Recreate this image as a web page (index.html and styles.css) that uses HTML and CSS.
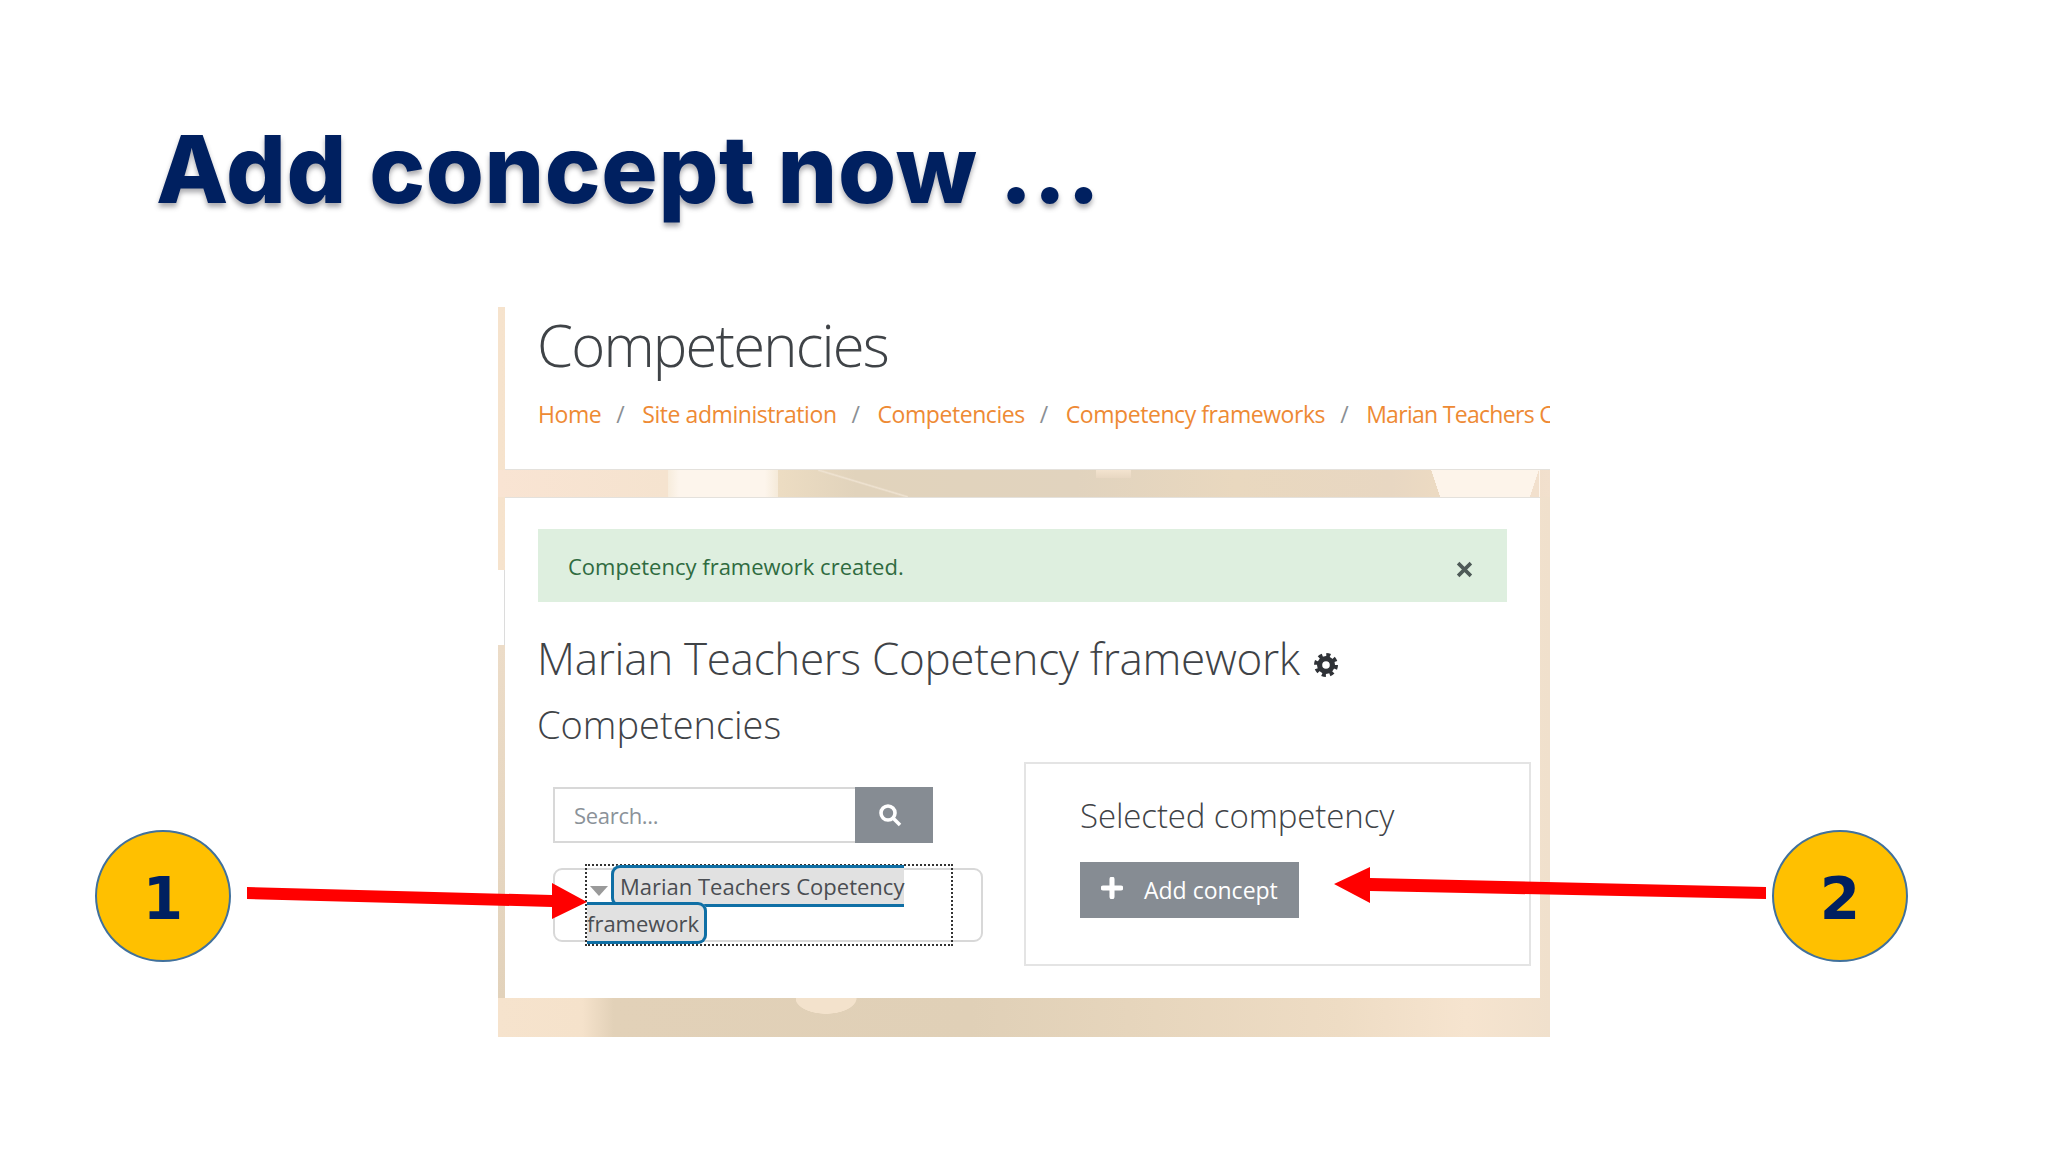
FILE: index.html
```html
<!DOCTYPE html>
<html lang="en">
<head>
<meta charset="utf-8">
<title>Add concept now</title>
<link rel="stylesheet" href="styles.css">
</head>
<body>
<main class="slide">
  <h1 class="slide-title">Add concept now ...</h1>
  <section class="shot">
    <header class="shot-head">
      <h2 class="page-title">Competencies</h2>
      <nav class="crumbs">
        <a>Home</a><span class="sep">/</span>
        <a>Site administration</a><span class="sep">/</span>
        <a>Competencies</a><span class="sep">/</span>
        <a>Competency frameworks</a><span class="sep">/</span>
        <a class="crumb-last">Marian Teachers Copetency framework</a>
      </nav>
    </header>
    <div class="card">
      <div class="alert">
        <span>Competency framework created.</span>
        <svg class="alert-close" viewBox="0 0 16 16"><path d="M2 2L14 14M14 2L2 14"/></svg>
      </div>
      <div class="fw-title">
        <h3>Marian Teachers Copetency framework</h3>
        <svg class="gear" viewBox="0 0 24 24"><circle class="gear-teeth" cx="12" cy="12" r="10"/><circle class="gear-ring" cx="12" cy="12" r="6.4"/></svg>
      </div>
      <h4 class="sub-title">Competencies</h4>
      <div class="columns">
        <div class="left-col">
          <div class="search">
            <div class="search-input">Search...</div>
            <div class="search-btn">
              <svg viewBox="0 0 24 24"><circle cx="10" cy="10" r="7"/><path d="M15.5 15.5L22 22"/></svg>
            </div>
          </div>
          <div class="tree">
            <div class="tree-focus"><i class="caret"></i><span class="tree-node">Marian Teachers Copetency framework</span></div>
          </div>
        </div>
        <aside class="panel">
          <h4 class="panel-title">Selected competency</h4>
          <div class="add-btn">
            <svg viewBox="0 0 20 20"><path d="M10 2V18M2 10H18"/></svg>
            <span>Add concept</span>
          </div>
        </aside>
      </div>
    </div>
  </section>
  <div class="badge badge-one">1</div>
  <div class="badge badge-two">2</div>
  <svg class="arrows" viewBox="0 0 2048 1152">
    <polygon points="247,887 552,895 552,883 587,902 552,919 552,907 247,899"/>
    <polygon points="1766,887 1370,878 1370,867 1334,884 1370,903 1370,891 1766,899"/>
  </svg>
</main>
</body>
</html>
```

FILE: styles.css
```css
* { box-sizing: border-box; }
html, body { margin: 0; padding: 0; background: #fff; }
.slide {
  position: relative;
  width: 2048px;
  height: 1152px;
  overflow: hidden;
  background: #fff;
  font-family: "Open Sans", "Liberation Sans", sans-serif;
  color: #3c4248;
}
h1, h2, h3, h4 { margin: 0; font-weight: 300; }

.slide-title {
  height: 307px;
  padding: 109px 0 0 156px;
  font-family: Inter, "Liberation Sans", sans-serif;
  font-size: 94px;
  line-height: 120px;
  font-weight: 800;
  letter-spacing: .6px;
  word-spacing: 1px;
  color: #002060;
  text-shadow: 0 4px 5px rgba(70, 70, 80, .45);
}

.shot {
  width: 1052px;
  height: 730px;
  margin-left: 498px;
  background:
    linear-gradient(#fff, #fff) 0 263px / 6px 75px no-repeat,
    linear-gradient(#dcdcdc, #dcdcdc) 6px 263px / 1px 75px no-repeat,
    linear-gradient(#ecdcc8, #e2d2bb) 0 338px / 7px 353px no-repeat,
    radial-gradient(ellipse 31px 16px at 30px 0, #f3e2cc 97%, transparent 100%) 298px 691px / 61px 16px no-repeat,
    linear-gradient(to top left, #f2e0cd 50%, transparent 52%) 1032px 163px / 9px 27px no-repeat,
    linear-gradient(to top right, #ecdac2 50%, transparent 52%) 933px 163px / 9px 27px no-repeat,
    linear-gradient(#fdf4ea, #fdf4ea) 933px 163px / 109px 27px no-repeat,
    linear-gradient(#f3e3cf, #e8d7c2) 598px 163px / 35px 8px no-repeat,
    linear-gradient(to top right, transparent 47%, #efe3d2 50%, transparent 53%) 320px 163px / 90px 27px no-repeat,
    linear-gradient(90deg, #f7ecdc 0, #fdf5ec 10%, #fdf5ec 88%, #f5ead9 100%) 170px 163px / 110px 27px no-repeat,
    linear-gradient(90deg, #f9e4d3 0, #f5e3cf 16%, #ecdcc2 27%, #e1d3bc 34%, #e1d3be 55%, #e9d8bf 70%, #e8d7c2 85%, #ecdac2 89%, #f2e0cd 100%) 0 163px / 100% 27px no-repeat,
    linear-gradient(90deg, #f6e3cd 0, #f5e2cb 8%, #e2d1b8 11%, #e0d0b7 45%, #e6d5bc 60%, #eedcc4 80%, #f6e4cf 92%, #f0e0cc 100%);
}
.shot-head {
  height: 163px;
  margin-left: 7px;
  padding: 0 0 0 33px;
  background: #fff;
  border-bottom: 1px solid #e4e1dc;
}
.page-title {
  margin-left: -1px;
  font-size: 58px;
  line-height: 76px;
  letter-spacing: -1.8px;
  color: #3f4347;
}
.crumbs {
  display: flex;
  align-items: baseline;
  margin-top: 13px;
  overflow: hidden;
  font-size: 23px;
  line-height: 36px;
  letter-spacing: -.44px;
  white-space: nowrap;
  color: #ee8a34;
}
.crumbs a { flex: none; }
.crumbs .crumb-last { letter-spacing: -.7px; }
.sep { flex: 0 0 41px; padding-left: 15px; color: #8b8f94; }
.card {
  height: 501px;
  margin: 27px 10px 0 7px;
  padding: 31px 33px 0;
  background: #fff;
  border-top: 1px solid #e4e1dc;
}
.alert {
  display: flex;
  align-items: center;
  justify-content: space-between;
  width: 969px;
  height: 73px;
  padding: 0 34px 0 30px;
  background: #deefdf;
  color: #2f6b3f;
  font-size: 22px;
}
.alert-close { width: 17px; height: 17px; margin-top: 7px; }
.alert-close path { fill: none; stroke: #4e5a57; stroke-width: 3.4; }
.fw-title {
  display: flex;
  align-items: center;
  gap: 14px;
  margin-top: 26px;
}
.fw-title h3 { margin-left: -1px; font-size: 44px; line-height: 60px; letter-spacing: -.3px; color: #3f4347; }
.gear { width: 24px; height: 24px; margin-top: 14px; }
.gear-teeth { fill: none; stroke: #2f3237; stroke-width: 4; stroke-dasharray: 4 3.85; }
.gear-ring { fill: none; stroke: #2f3237; stroke-width: 5.2; }
.sub-title { margin: 8px 0 0 -1px; font-size: 38px; line-height: 56px; color: #3f4347; }
.columns { display: flex; margin-top: 10px; }
.left-col { flex: 0 0 486px; padding: 25px 0 0 15px; }
.search { display: flex; height: 56px; width: 380px; }
.search-input {
  width: 302px;
  padding-left: 19px;
  border: 2px solid #d8d8d8;
  border-right: 0;
  font-size: 22px;
  line-height: 52px;
  letter-spacing: -.3px;
  color: #8b9299;
}
.search-btn {
  display: flex;
  align-items: center;
  justify-content: center;
  width: 78px;
  background: #868c93;
}
.search-btn svg { width: 24px; height: 24px; margin-right: 8px; }
.search-btn circle, .search-btn path { fill: none; stroke: #fff; stroke-width: 3.6; }
.tree {
  width: 430px;
  height: 74px;
  margin-top: 25px;
  border: 2px solid #d8d8d8;
  border-radius: 9px;
  position: relative;
}
.tree-focus {
  position: absolute;
  left: 30px;
  top: -6px;
  width: 368px;
  height: 82px;
  border: 2px dotted #333;
  font-size: 22px;
  line-height: 37px;
  color: #4a4d52;
  padding-top: 2px;
}
.caret {
  display: inline-block;
  width: 0;
  height: 0;
  margin: 0 3px 0 3px;
  border-left: 9px solid transparent;
  border-right: 9px solid transparent;
  border-top: 10px solid #9a9a9a;
  vertical-align: -1px;
}
.tree-node {
  padding: 3px 5px 3px 6px;
  background: #e1e1e1;
  border: 3px solid #0f6fa5;
  border-radius: 9px;
}
.panel {
  flex: 0 0 507px;
  height: 204px;
  padding: 29px 0 0 54px;
  border: 2px solid #e4e4e4;
}
.panel-title { font-size: 33px; line-height: 46px; letter-spacing: -.1px; color: #3f4347; }
.add-btn {
  display: flex;
  align-items: center;
  width: 219px;
  height: 56px;
  margin-top: 23px;
  padding-left: 21px;
  gap: 21px;
  background: #868c93;
  color: #fff;
  font-size: 23px;
}
.add-btn svg { width: 22px; height: 22px; margin-top: -4px; }
.add-btn path { fill: none; stroke: #fff; stroke-width: 4.6; stroke-linecap: round; }

.badge {
  position: absolute;
  top: 830px;
  display: flex;
  align-items: center;
  justify-content: center;
  width: 136px;
  height: 132px;
  padding-top: 5px;
  border: 2px solid #41719c;
  border-radius: 50%;
  background: #ffc000;
  font-family: "DejaVu Sans", sans-serif;
  font-size: 58px;
  font-weight: 700;
  color: #002060;
}
.badge-one { left: 95px; }
.badge-two { left: 1772px; }
.arrows { position: absolute; inset: 0; width: 2048px; height: 1152px; pointer-events: none; }
.arrows polygon { fill: #ff0000; }
```
